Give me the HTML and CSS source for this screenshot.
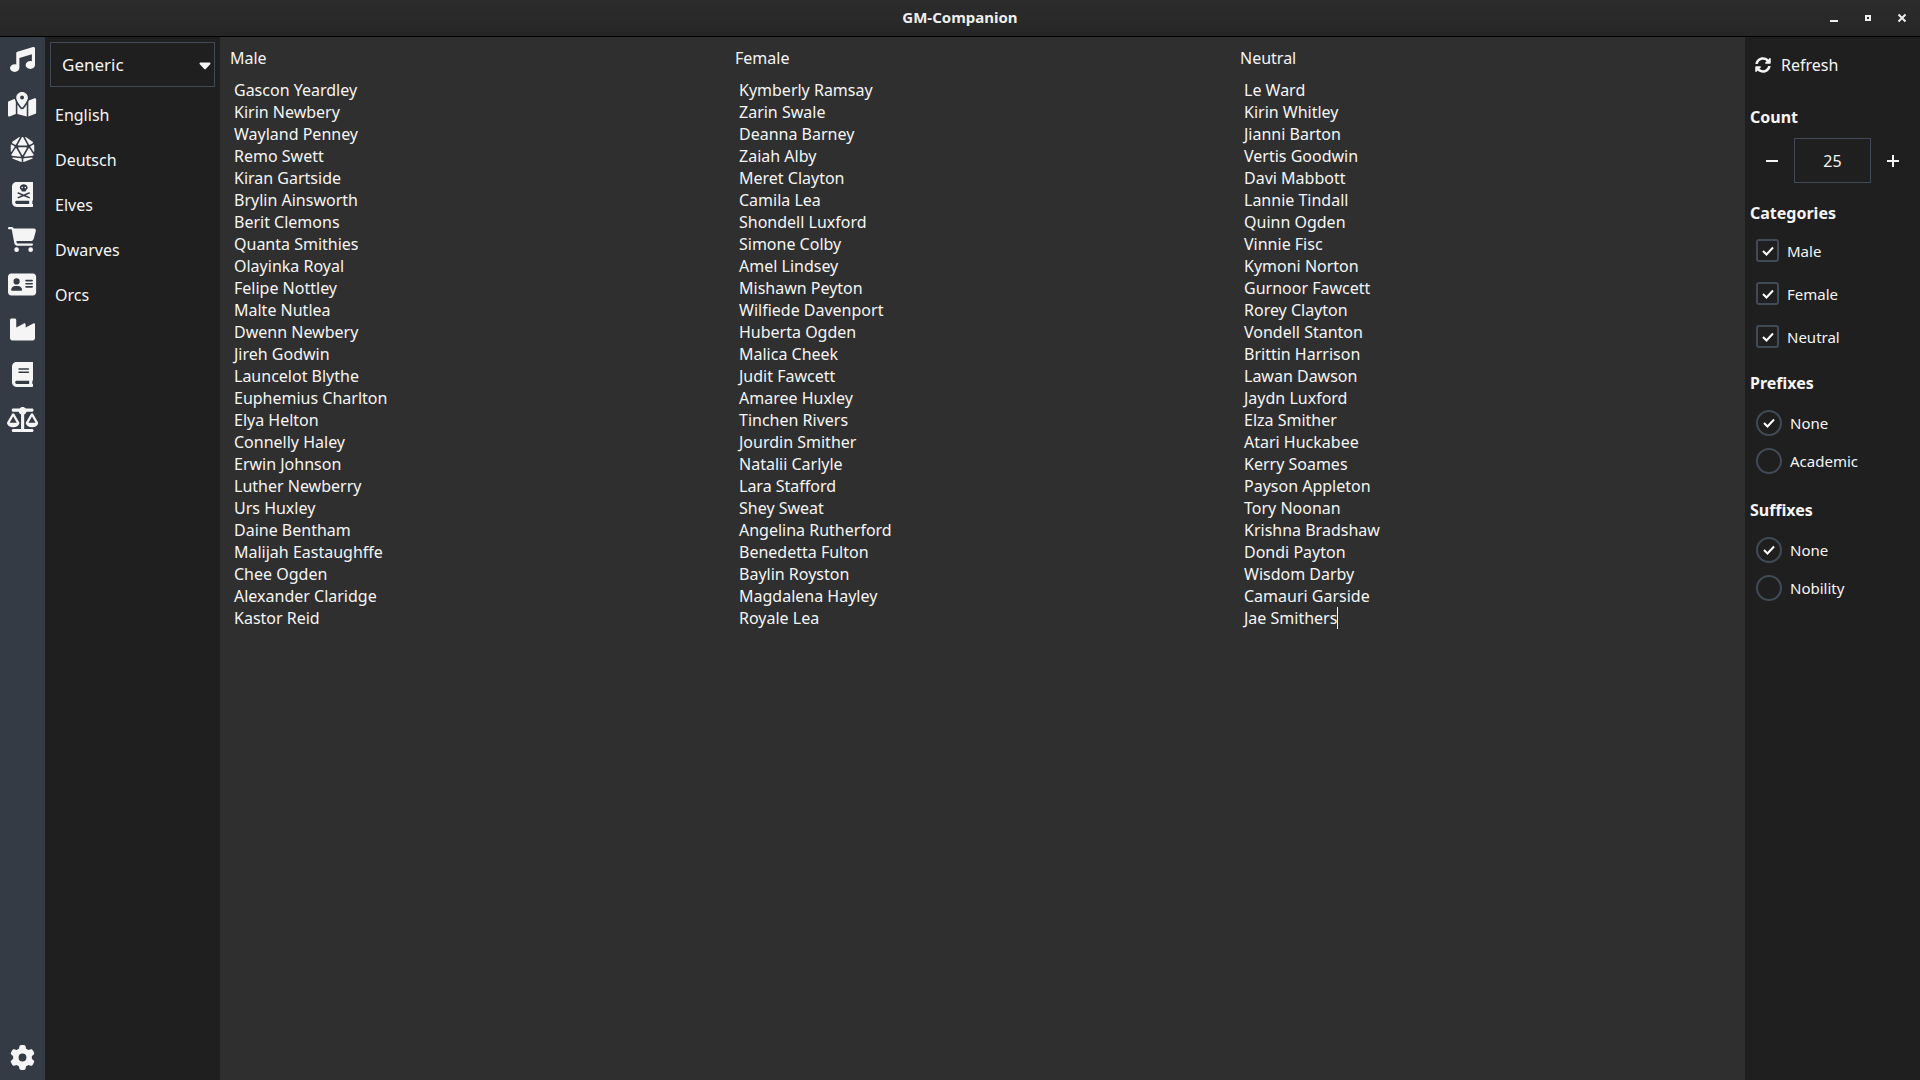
FILE: index.html
```html
<!DOCTYPE html>
<html lang="en">
<head>
<meta charset="utf-8">
<meta name="viewport" content="width=device-width, initial-scale=1">
<title>GM-Companion</title>
<link rel="stylesheet" href="styles.css">
</head>
<body>
<header class="titlebar">
  <h1 class="title">GM-Companion</h1>
  <div class="window-controls">
    <button type="button" aria-label="Minimize"><svg width="12" height="12" viewBox="0 0 12 12"><path d="M2 8h8v2H2z"/></svg></button>
    <button type="button" aria-label="Maximize"><svg width="12" height="12" viewBox="0 0 12 12"><path fill-rule="evenodd" d="M3 3h6v6H3zM5 5v2h2V5z"/></svg></button>
    <button type="button" aria-label="Close"><svg width="12" height="12" viewBox="0 0 12 12"><path class="stroke" d="M2.500 2.500l7 7M9.500 2.500l-7 7"/></svg></button>
  </div>
</header>
<div class="app">
  <nav class="toolbar" aria-label="Tools">
    <button type="button" aria-label="Audio"><svg viewBox="0 0 512 512"><path d="M499.1 6.3c8.1 6 12.9 15.6 12.9 25.7v72V368c0 44.2-43 80-96 80s-96-35.8-96-80s43-80 96-80c11.2 0 22 1.6 32 4.600V147L192 223.8V432c0 44.2-43 80-96 80s-96-35.8-96-80s43-80 96-80c11.2 0 22 1.6 32 4.600V200 128c0-14.1 9.3-26.600 22.8-30.700l320-96c9.700-2.900 20.200-1.100 28.300 5z"/></svg></button>
    <button type="button" aria-label="Maps"><svg viewBox="0 0 576 512"><path d="M408 120c0 54.6-73.1 151.9-105.2 192c-7.7 9.6-22 9.6-29.6 0C241.100 271.900 168 174.600 168 120C168 53.700 221.700 0 288 0s120 53.700 120 120zm8 80.400c3.500-6.900 6.700-13.800 9.600-20.600c.5-1.200 1-2.500 1.500-3.700l116-46.400C558.900 123.400 576 135 576 152V422.800c0 9.800-6 18.600-15.100 22.300L416 503V200.400zM137.600 138.300c2.400 14.100 7.200 28.300 12.800 41.500c2.900 6.800 6.100 13.700 9.600 20.600V451.800L32.900 502.700C17.100 509 0 497.400 0 480.400V209.600c0-9.800 6-18.600 15.100-22.300l122.600-49zM327.800 332c13.900-17.400 35.700-45.700 56.200-77V504.300L192 449.400V255c20.500 31.300 42.300 59.600 56.200 77c20.500 25.600 59.100 25.600 79.600 0zM288 152a40 40 0 1 0 0-80 40 40 0 1 0 0 80z"/></svg></button>
    <button type="button" aria-label="Dice"><svg viewBox="0 0 512 512"><path d="M48.7 125.8l53.2 31.9c7.8 4.7 17.8 2 22.2-5.9L201.6 12.1c3-5.4-.9-12.1-7.1-12.1c-1.6 0-3.2 .5-4.6 1.4L47.9 98.8c-9.6 6.6-9.2 20.9 .8 26.9zM16 171.7V295.3c0 8 10.4 11 14.7 4.4l60-92c5-7.6 2.6-17.8-5.2-22.5L40.2 158C29.6 151.6 16 159.3 16 171.7zM310.4 12.1l77.6 139.6c4.4 7.9 14.5 10.6 22.2 5.9l53.2-31.9c10-6 10.4-20.3 .8-26.9L322.1 1.4c-1.4-.9-3-1.4-4.6-1.4c-6.2 0-10.1 6.7-7.1 12.1zM496 171.7c0-12.4-13.6-20.1-24.2-13.7l-45.3 27.2c-7.8 4.7-10.1 14.9-5.2 22.5l60 92c4.3 6.7 14.7 3.6 14.7-4.4V171.7zm-49.3 246L286.1 436.6c-8.1 .9-14.1 7.8-14.1 15.9v52.8c0 3.7 3 6.8 6.8 6.8c.8 0 1.6-.1 2.4-.4l172.7-64c6.1-2.2 10.1-8 10.1-14.5c0-9.3-8.1-16.5-17.3-15.4zM233.2 512c3.7 0 6.8-3 6.8-6.8V452.6c0-8.1-6.1-14.9-14.1-15.9l-160.6-19c-9.2-1.1-17.3 6.1-17.3 15.4c0 6.5 4 12.3 10.1 14.5l172.7 64c.8 .3 1.6 .4 2.4 .4zM41.7 382.9l170.9 20.2c7.8 .9 13.4-7.5 9.5-14.3l-85.7-150c-5.9-10.4-20.7-10.8-27.3-.8L30.2 358.2c-6.5 9.9-.3 23.3 11.5 24.7zm439.6-24.8L402.9 238.1c-6.5-10-21.4-9.6-27.3 .8L290.2 388.5c-3.9 6.8 1.6 15.2 9.5 14.3l170.1-20c11.8-1.4 18-14.7 11.5-24.6zm-216.9 11l78.4-137.2c6.1-10.7-1.6-23.9-13.9-23.9H183.1c-12.3 0-20 13.3-13.9 23.9l78.4 137.2c3.7 6.4 13 6.4 16.7 0zM174.4 176H337.6c12.2 0 19.9-13.1 14-23.8l-80-144c-2.8-5.1-8.2-8.2-14-8.2h-3.2c-5.8 0-11.2 3.2-14 8.2l-80 144c-5.9 10.7 1.8 23.8 14 23.8z"/></svg></button>
    <button type="button" aria-label="Combat tracker"><svg viewBox="0 0 448 512"><path fill-rule="evenodd" d="M0 96C0 43 43 0 96 0H384h32c17.7 0 32 14.3 32 32V352c0 17.7-14.3 32-32 32v64c17.7 0 32 14.3 32 32s-14.3 32-32 32H384 96c-53 0-96-43-96-96V96zM64 416c0 17.7 14.3 32 32 32H352V384H96c-17.7 0-32 14.3-32 32z M320 112c0-35.3-35.8-64-80-64s-80 28.7-80 64c0 20.9 12.6 39.5 32 51.2V176c0 8.8 7.2 16 16 16h64c8.8 0 16-7.2 16-16V163.2c19.4-11.7 32-30.3 32-51.2zM208 96a16 16 0 1 1 0 32 16 16 0 1 1 0-32zm48 16a16 16 0 1 1 32 0 16 16 0 1 1 -32 0zM134.3 209.3c-8.1-3.5-17.5 .3-21 8.4s.3 17.5 8.4 21L199.4 272l-77.7 33.3c-8.1 3.5-11.9 12.9-8.4 21s12.9 11.9 21 8.4L240 289.4l105.7 45.3c8.1 3.5 17.5-.3 21-8.4s-.3-17.5-8.4-21L280.6 272l77.7-33.3c8.1-3.5 11.9-12.9 8.4-21s-12.9-11.9-21-8.4L240 254.6 134.3 209.3z"/></svg></button>
    <button type="button" aria-label="Shops"><svg viewBox="0 0 576 512"><path d="M0 24C0 10.7 10.7 0 24 0H69.5c22 0 41.5 12.8 50.6 32h411c26.3 0 45.5 25 38.6 50.4l-41 152.3c-8.5 31.4-37 53.3-69.5 53.3H170.7l5.4 28.5c2.2 11.3 12.1 19.5 23.6 19.5H488c13.3 0 24 10.7 24 24s-10.7 24-24 24H199.7c-34.6 0-64.3-24.6-70.7-58.5L77.4 54.5c-.7-3.8-4-6.5-7.9-6.5H24C10.7 48 0 37.3 0 24zM128 464a48 48 0 1 1 96 0 48 48 0 1 1 -96 0zm336-48a48 48 0 1 1 0 96 48 48 0 1 1 0-96z"/></svg></button>
    <button type="button" aria-label="Characters"><svg viewBox="0 0 576 512"><path fill-rule="evenodd" d="M64 32C28.7 32 0 60.7 0 96V416c0 35.3 28.7 64 64 64H512c35.3 0 64-28.7 64-64V96c0-35.3-28.7-64-64-64H64zm80 256h64c44.2 0 80 35.8 80 80c0 8.8-7.2 16-16 16H80c-8.8 0-16-7.2-16-16c0-44.2 35.8-80 80-80zm-32-96a64 64 0 1 1 128 0 64 64 0 1 1 -128 0zm256-32H496c8.8 0 16 7.2 16 16s-7.2 16-16 16H368c-8.8 0-16-7.2-16-16s7.2-16 16-16zm0 64H496c8.8 0 16 7.2 16 16s-7.2 16-16 16H368c-8.8 0-16-7.2-16-16s7.2-16 16-16zm0 64H496c8.8 0 16 7.2 16 16s-7.2 16-16 16H368c-8.8 0-16-7.2-16-16s7.2-16 16-16z"/></svg></button>
    <button type="button" aria-label="Generators"><svg viewBox="0 0 512 512"><path d="M32 32C14.3 32 0 46.3 0 64V304v48 80c0 26.5 21.5 48 48 48H464c26.5 0 48-21.5 48-48V304 152.2c0-18.2-19.4-29.7-35.4-21.1L320 215.4V152.2c0-18.2-19.4-29.7-35.4-21.1L128 215.4V64c0-17.7-14.3-32-32-32H32z"/></svg></button>
    <button type="button" aria-label="Notes"><svg viewBox="0 0 448 512"><path fill-rule="evenodd" d="M96 0C43 0 0 43 0 96V416c0 53 43 96 96 96H384h32c17.7 0 32-14.3 32-32s-14.3-32-32-32V384c17.7 0 32-14.3 32-32V32c0-17.7-14.3-32-32-32H384 96zm0 384H352v64H96c-17.7 0-32-14.3-32-32s14.3-32 32-32zm32-240c0-8.8 7.2-16 16-16H336c8.8 0 16 7.2 16 16s-7.2 16-16 16H144c-8.8 0-16-7.2-16-16zm16 48H336c8.8 0 16 7.2 16 16s-7.2 16-16 16H144c-8.8 0-16-7.2-16-16s7.2-16 16-16z"/></svg></button>
    <button type="button" aria-label="Converter"><svg viewBox="0 0 640 512"><path fill-rule="evenodd" d="M384 32H512c17.7 0 32 14.3 32 32s-14.3 32-32 32H398.4c-5.2 25.8-22.9 47.1-46.4 57.3V448H512c17.7 0 32 14.3 32 32s-14.3 32-32 32H320 128c-17.7 0-32-14.3-32-32s14.3-32 32-32H288V153.3c-23.5-10.3-41.2-31.6-46.4-57.3H128c-17.7 0-32-14.3-32-32s14.3-32 32-32H256c14.6-19.4 37.8-32 64-32s49.4 12.6 64 32zm55.6 288H584.4L512 195.8 439.6 320zM512 416c-62.9 0-115.2-34-126-78.9c-2.6-11 1-22.3 6.7-32.1l95.2-163.2c5-8.6 14.2-13.8 24.1-13.8s19.1 5.3 24.1 13.8l95.2 163.2c5.7 9.8 9.3 21.1 6.7 32.1C627.2 382 574.9 416 512 416zM126.8 195.8L54.4 320H199.3L126.8 195.8zM.9 337.1c-2.6-11 1-22.3 6.7-32.1l95.2-163.2c5-8.6 14.2-13.8 24.1-13.8s19.1 5.3 24.1 13.8l95.2 163.2c5.7 9.8 9.3 21.1 6.7 32.1C242 382 189.7 416 126.8 416S11.700 382 .9 337.1z"/></svg></button>
    <button type="button" class="settings" aria-label="Settings"><svg viewBox="0 0 512 512"><path d="M495.9 166.6c3.2 8.7 .5 18.4-6.4 24.6l-43.3 39.4c1.1 8.3 1.7 16.8 1.7 25.4s-.6 17.1-1.7 25.4l43.3 39.4c6.9 6.2 9.6 15.9 6.4 24.6c-4.4 11.9-9.7 23.3-15.8 34.3l-4.7 8.1c-6.6 11-14 21.4-22.1 31.2c-5.9 7.2-15.7 9.6-24.5 6.8l-55.7-17.7c-13.4 10.3-28.2 18.9-44 25.4l-12.5 57.1c-2 9.1-9 16.3-18.2 17.8c-13.8 2.3-28 3.5-42.5 3.5s-28.7-1.2-42.5-3.5c-9.2-1.5-16.2-8.7-18.2-17.8l-12.5-57.1c-15.8-6.5-30.6-15.1-44-25.4L83.1 425.9c-8.8 2.8-18.6 .3-24.5-6.8c-8.1-9.8-15.5-20.2-22.1-31.2l-4.7-8.1c-6.1-11-11.4-22.4-15.8-34.3c-3.2-8.7-.5-18.4 6.4-24.6l43.3-39.4C64.6 273.1 64 264.6 64 256s.6-17.1 1.7-25.4L22.4 191.2c-6.9-6.2-9.6-15.9-6.4-24.6c4.4-11.9 9.7-23.3 15.8-34.3l4.7-8.1c6.6-11 14-21.4 22.1-31.2c5.9-7.2 15.7-9.6 24.5-6.8l55.7 17.7c13.4-10.3 28.2-18.9 44-25.4l12.5-57.1c2-9.1 9-16.3 18.2-17.8C227.3 1.2 241.5 0 256 0s28.7 1.2 42.5 3.500c9.2 1.5 16.2 8.7 18.2 17.8l12.5 57.1c15.8 6.5 30.6 15.1 44 25.4l55.7-17.7c8.8-2.8 18.6-.3 24.5 6.8c8.1 9.8 15.5 20.2 22.1 31.2l4.7 8.1c6.1 11 11.4 22.4 15.8 34.3zM256 336a80 80 0 1 0 0-160 80 80 0 1 0 0 160z"/></svg></button>
  </nav>

  <aside class="generators">
    <div class="combo">
      <select aria-label="Name set"><option>Generic</option></select>
      <svg class="caret-down" width="12" height="8" viewBox="0 0 12 8"><path d="M1.500 0.500h9a1 1 0 0 1 .7 1.700L7 6.700a1.400 1.400 0 0 1-2 0L.8 2.200a1 1 0 0 1 .7-1.700z"/></svg>
    </div>
    <button type="button">English</button>
    <button type="button">Deutsch</button>
    <button type="button">Elves</button>
    <button type="button">Dwarves</button>
    <button type="button">Orcs</button>
  </aside>

  <main class="names">
    <section class="column">
      <h2>Male</h2>
      <ul>
        <li>Gascon Yeardley</li><li>Kirin Newbery</li><li>Wayland Penney</li><li>Remo Swett</li><li>Kiran Gartside</li>
        <li>Brylin Ainsworth</li><li>Berit Clemons</li><li>Quanta Smithies</li><li>Olayinka Royal</li><li>Felipe Nottley</li>
        <li>Malte Nutlea</li><li>Dwenn Newbery</li><li>Jireh Godwin</li><li>Launcelot Blythe</li><li>Euphemius Charlton</li>
        <li>Elya Helton</li><li>Connelly Haley</li><li>Erwin Johnson</li><li>Luther Newberry</li><li>Urs Huxley</li>
        <li>Daine Bentham</li><li>Malijah Eastaughffe</li><li>Chee Ogden</li><li>Alexander Claridge</li><li>Kastor Reid</li>
      </ul>
    </section>
    <section class="column">
      <h2>Female</h2>
      <ul>
        <li>Kymberly Ramsay</li><li>Zarin Swale</li><li>Deanna Barney</li><li>Zaiah Alby</li><li>Meret Clayton</li>
        <li>Camila Lea</li><li>Shondell Luxford</li><li>Simone Colby</li><li>Amel Lindsey</li><li>Mishawn Peyton</li>
        <li>Wilfiede Davenport</li><li>Huberta Ogden</li><li>Malica Cheek</li><li>Judit Fawcett</li><li>Amaree Huxley</li>
        <li>Tinchen Rivers</li><li>Jourdin Smither</li><li>Natalii Carlyle</li><li>Lara Stafford</li><li>Shey Sweat</li>
        <li>Angelina Rutherford</li><li>Benedetta Fulton</li><li>Baylin Royston</li><li>Magdalena Hayley</li><li>Royale Lea</li>
      </ul>
    </section>
    <section class="column">
      <h2>Neutral</h2>
      <ul>
        <li>Le Ward</li><li>Kirin Whitley</li><li>Jianni Barton</li><li>Vertis Goodwin</li><li>Davi Mabbott</li>
        <li>Lannie Tindall</li><li>Quinn Ogden</li><li>Vinnie Fisc</li><li>Kymoni Norton</li><li>Gurnoor Fawcett</li>
        <li>Rorey Clayton</li><li>Vondell Stanton</li><li>Brittin Harrison</li><li>Lawan Dawson</li><li>Jaydn Luxford</li>
        <li>Elza Smither</li><li>Atari Huckabee</li><li>Kerry Soames</li><li>Payson Appleton</li><li>Tory Noonan</li>
        <li>Krishna Bradshaw</li><li>Dondi Payton</li><li>Wisdom Darby</li><li>Camauri Garside</li><li class="editing">Jae Smithers<span class="text-cursor"></span></li>
      </ul>
    </section>
  </main>

  <form class="options">
    <button type="button" class="refresh"><svg width="16" height="16" viewBox="0 0 512 512"><path d="M370.72 133.28C339.458 104.008 298.888 87.962 255.848 88c-77.458.068-144.328 53.178-162.791 126.85-1.344 5.363-6.122 9.15-11.651 9.15H24.103c-7.498 0-13.194-6.807-11.807-14.176C33.933 94.924 134.813 8 256 8c66.448 0 126.791 26.136 171.315 68.685L463.03 40.97C478.149 25.851 504 36.559 504 57.941V192c0 13.255-10.745 24-24 24H345.941c-21.382 0-32.09-25.851-16.971-40.971l41.75-41.749zM32 296h134.059c21.382 0 32.09 25.851 16.971 40.971l-41.75 41.75c31.262 29.273 71.835 45.319 114.876 45.28 77.418-.07 144.315-53.144 162.787-126.849 1.344-5.363 6.122-9.15 11.651-9.15h57.304c7.498 0 13.194 6.807 11.807 14.176C478.067 417.076 377.187 504 256 504c-66.448 0-126.791-26.136-171.315-68.685L48.97 471.03C33.851 486.149 8 475.441 8 454.059V320c0-13.255 10.745-24 24-24z"/></svg>Refresh</button>

    <section class="group">
      <h3><label for="count">Count</label></h3>
      <div class="spinbox">
        <button type="button" aria-label="Decrease"><svg width="14" height="14" viewBox="0 0 14 14"><path d="M1 6h12v2H1z"/></svg></button>
        <input id="count" type="text" inputmode="numeric" value="25">
        <button type="button" aria-label="Increase"><svg width="14" height="14" viewBox="0 0 14 14"><path d="M1 6h5V1h2v5h5v2H8v5H6V8H1z"/></svg></button>
      </div>
    </section>

    <section class="group">
      <h3>Categories</h3>
      <div class="checks">
        <label><span class="box"><input type="checkbox" checked><svg class="tick" viewBox="0 0 12 10"><path d="M1 5l3.500 3.500L11 1.500"/></svg></span>Male</label>
        <label><span class="box"><input type="checkbox" checked><svg class="tick" viewBox="0 0 12 10"><path d="M1 5l3.500 3.500L11 1.500"/></svg></span>Female</label>
        <label><span class="box"><input type="checkbox" checked><svg class="tick" viewBox="0 0 12 10"><path d="M1 5l3.500 3.500L11 1.500"/></svg></span>Neutral</label>
      </div>
    </section>

    <section class="group">
      <h3>Prefixes</h3>
      <div class="radios">
        <label><span class="box"><input type="radio" name="prefix" checked><svg class="tick" viewBox="0 0 12 10"><path d="M1 5l3.500 3.500L11 1.500"/></svg></span>None</label>
        <label><span class="box"><input type="radio" name="prefix"></span>Academic</label>
      </div>
    </section>

    <section class="group">
      <h3>Suffixes</h3>
      <div class="radios">
        <label><span class="box"><input type="radio" name="suffix" checked><svg class="tick" viewBox="0 0 12 10"><path d="M1 5l3.500 3.500L11 1.500"/></svg></span>None</label>
        <label><span class="box"><input type="radio" name="suffix"></span>Nobility</label>
      </div>
    </section>
  </form>
</div>
</body>
</html>
```
FILE: styles.css
```css
:root {
  --toolbar: #353b45;
  --panel: #1f1f1f;
  --content: #2f2f2f;
  --border: #414b57;
  --text: #f5f5f5;
}

* {
  box-sizing: border-box;
}

body {
  margin: 0;
  min-height: 100vh;
  display: flex;
  flex-direction: column;
  background: var(--content);
  color: var(--text);
  font: 16px/22px "Noto Sans", sans-serif;
}

h1, h2, h3, ul {
  margin: 0;
  padding: 0;
  font-size: 16px;
}

button, input, select {
  margin: 0;
  padding: 0;
  border: 0;
  border-radius: 0;
  background: none;
  color: inherit;
  font: inherit;
}

svg {
  display: block;
  fill: currentColor;
}

/* Window title bar */
.titlebar {
  display: grid;
  grid-template-columns: 1fr auto 1fr;
  align-items: center;
  height: 37px;
  border-bottom: 1px solid #000;
  background: linear-gradient(#2c2c2c, #262626);
}

.title {
  grid-column: 2;
  font-size: 15px;
  line-height: 20px;
  padding-bottom: 2px;
  color: #eee;
}

.window-controls {
  display: flex;
  justify-content: flex-end;
  gap: 22px;
  padding-right: 12px;
  color: #eee;
}

.stroke {
  fill: none;
  stroke: currentColor;
  stroke-width: 2;
}

.app {
  flex: 1;
  display: grid;
  grid-template-columns: 45px 175px 1fr 175px;
}

/* Tool icons */
.toolbar {
  display: flex;
  flex-direction: column;
  background: var(--toolbar);
}

.toolbar button {
  display: flex;
  align-items: center;
  justify-content: center;
  height: 45px;
}

.toolbar svg {
  height: 25px;
}

.toolbar .settings {
  margin-top: auto;
}

/* Name set list */
.generators {
  display: flex;
  flex-direction: column;
  padding: 5px;
  background: var(--panel);
}

.combo {
  position: relative;
  margin-bottom: 5px;
}

.combo select {
  appearance: none;
  width: 100%;
  height: 45px;
  padding: 0 11px;
  border: 1px solid var(--border);
  font-size: 17px;
}

.caret-down {
  position: absolute;
  right: 4px;
  top: 20px;
  pointer-events: none;
}

.generators button {
  height: 45px;
  padding: 0 5px;
  text-align: left;
}

/* Generated names */
.names {
  display: grid;
  grid-template-columns: repeat(3, 1fr);
  gap: 10px;
  padding: 10px;
  background: var(--content);
}

.column h2 {
  margin-bottom: 10px;
  font-weight: 400;
}

.column ul {
  padding-left: 4px;
  list-style: none;
}

.editing {
  display: flex;
}

.text-cursor {
  width: 1px;
  background: #fff;
}

/* Options */
.options {
  display: flex;
  flex-direction: column;
  gap: 19px;
  padding: 5px;
  background: var(--panel);
}

.refresh {
  display: flex;
  align-items: center;
  gap: 10px;
  height: 45px;
  padding: 0 5px;
}

.group h3 {
  margin-bottom: 10px;
}

.spinbox {
  display: grid;
  grid-template-columns: 44px 1fr 44px;
  height: 45px;
}

.spinbox button {
  display: flex;
  align-items: center;
  justify-content: center;
}

.spinbox input {
  width: 100%;
  border: 1px solid var(--border);
  text-align: center;
}

.checks, .radios {
  display: flex;
  flex-direction: column;
  padding-left: 6px;
  font-size: 15px;
}

.checks {
  gap: 10px;
}

.checks label, .radios label {
  display: flex;
  align-items: center;
  gap: 8px;
  height: 33px;
}

.radios label {
  height: 38px;
}

.box {
  display: grid;
  place-items: center;
}

.box > * {
  grid-area: 1 / 1;
}

.box input {
  appearance: none;
  width: 23px;
  height: 23px;
  border: 2px solid var(--border);
  border-radius: 3px;
}

.radios .box input {
  width: 26px;
  height: 26px;
  border-radius: 50%;
}

.tick {
  width: 12px;
  height: 10px;
  fill: none;
  stroke: #fff;
  stroke-width: 2;
  pointer-events: none;
}
```
